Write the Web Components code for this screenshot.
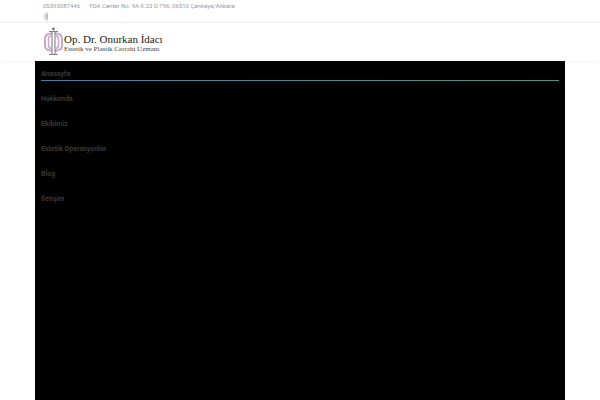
<!DOCTYPE html>
<html lang="tr">
<head>
<meta charset="UTF-8">
<meta name="viewport" content="width=device-width, initial-scale=1">
<title>Op. Dr. Onurkan İdacı</title>
<style>
    body {
        margin: 0;
        min-height: 100vh;
        display: flex;
        flex-direction: column;
        background: #fff;
        font-family: Roboto, "Liberation Sans", sans-serif;
        --page-width: 530px;
    }
</style>
</head>
<body>
<top-bar>
    <a href="tel:05393087446">05393087446</a>
    <span>YDA Center No: 9A K:23 D:796, 06510 Çankaya/Ankara</span>
</top-bar>
<site-header></site-header>
<site-menu>
    <menu-link href="#anasayfa" active>Anasayfa</menu-link>
    <menu-link href="#hakkimda">Hakkımda</menu-link>
    <menu-link href="#ekibimiz">Ekibimiz</menu-link>
    <menu-link href="#operasyonlar">Estetik Operasyonlar</menu-link>
    <menu-link href="#blog">Blog</menu-link>
    <menu-link href="#iletisim">İletişim</menu-link>
</site-menu>

<script>
class TopBar extends HTMLElement {
    connectedCallback() {
        this.attachShadow({ mode: 'open' });
        this.shadowRoot.innerHTML = `
            <style>
                :host {
                    display: block;
                    border-bottom: 1px solid #f5f5f5;
                    color: #999;
                    font-size: 6px;
                    font-weight: 400;
                    line-height: 12px;
                }

                .container {
                    box-sizing: border-box;
                    max-width: var(--page-width);
                    height: 22px;
                    margin: 0 auto;
                    padding: 0 8px;
                }

                .info {
                    display: flex;
                    gap: 9px;
                }

                ::slotted(*) {
                    color: inherit;
                    text-decoration: none;
                    white-space: nowrap;
                }

                .social {
                    display: block;
                    width: 5px;
                    height: 9px;
                }

                svg {
                    display: block;
                }
            </style>

            <div class="container">
                <div class="info"><slot></slot></div>
                <a class="social" href="#social" aria-label="Instagram">
                    <svg width="5" height="9" viewBox="0 0 5 9">
                        <path d="M5 0 A4.5 4.5 0 0 0 5 9Z" fill="#dedede"/>
                        <path d="M5 2 H4 Q3 2 3 3 V6 Q3 7 4 7 H5Z" fill="#bdbdbd"/>
                    </svg>
                </a>
            </div>
        `;
    }
}

class SiteHeader extends HTMLElement {
    connectedCallback() {
        this.attachShadow({ mode: 'open' });
        this.shadowRoot.innerHTML = `
            <style>
                :host {
                    display: block;
                    box-shadow: 0 0 3px rgba(0, 0, 0, 0.08);
                }

                .container {
                    box-sizing: border-box;
                    max-width: var(--page-width);
                    height: 38px;
                    margin: 0 auto;
                    padding: 0 8px;
                    display: flex;
                    align-items: center;
                }

                .logo {
                    display: flex;
                    align-items: center;
                    gap: 1px;
                    color: #222;
                    font-family: "Liberation Serif", serif;
                    text-decoration: none;
                    white-space: nowrap;
                }

                .text {
                    padding-top: 2px;
                }

                .name, .title {
                    display: block;
                }

                .name {
                    font-size: 11px;
                    line-height: 11px;
                }

                .title {
                    color: #444;
                    font-size: 7px;
                    line-height: 8px;
                }
            </style>

            <div class="container">
                <a class="logo" href="#anasayfa">
                    <svg width="20" height="30" viewBox="0 0 20 30" fill="none" aria-hidden="true">
                        <g stroke="#cba6c6">
                            <path d="M9 6.5 H8 C4 6.5 2 9 2 12 V18 C2 21 4 23.5 8 23.5 H9" stroke-width="2"/>
                            <path d="M12 6.5 H13 C17 6.5 19 9 19 12 V18 C19 21 17 23.5 13 23.5 H12" stroke-width="2"/>
                            <path d="M8 8.5 C6 9 5.5 10.5 5.5 12 V18 C5.5 19.5 6 21 8 21.5" stroke-width="1.5"/>
                            <path d="M13 8.5 C15 9 15.5 10.5 15.5 12 V18 C15.5 19.5 15 21 13 21.5" stroke-width="1.5"/>
                        </g>
                        <g stroke="#77727f">
                            <path d="M9 4 V27 M12 4 V27" stroke-width="1"/>
                            <path d="M6 4.5 H15 M6 27.5 H15" stroke-width="0.9"/>
                        </g>
                        <circle cx="10.5" cy="2" r="1.4" fill="#77727f"/>
                    </svg>
                    <span class="text">
                        <span class="name">Op. Dr. Onurkan İdacı</span>
                        <span class="title">Estetik ve Plastik Cerrahi Uzmanı</span>
                    </span>
                </a>
            </div>
        `;
    }
}

class SiteMenu extends HTMLElement {
    connectedCallback() {
        this.attachShadow({ mode: 'open' });
        this.shadowRoot.innerHTML = `
            <style>
                :host {
                    display: flex;
                    flex: 1;
                }

                nav {
                    box-sizing: border-box;
                    flex: 1;
                    max-width: var(--page-width);
                    margin: 0 auto;
                    padding: 1px 6px 0;
                    background: #000;
                    position: relative;
                }
            </style>

            <nav aria-label="Menü"><slot></slot></nav>
        `;
    }
}

class MenuLink extends HTMLElement {
    connectedCallback() {
        this.attachShadow({ mode: 'open' });
        this.shadowRoot.innerHTML = `
            <style>
                :host {
                    display: block;
                    height: 25px;
                }

                a {
                    display: block;
                    padding-top: 6px;
                    color: #383838;
                    font-size: 7px;
                    font-weight: 700;
                    line-height: 12px;
                    text-decoration: none;
                }

                :host([active]) a::after {
                    content: '';
                    display: block;
                    height: 1px;
                    background: linear-gradient(90deg, #4a7fa5, #4f9480);
                }
            </style>

            <a href="${this.getAttribute('href')}"><slot></slot></a>
        `;
    }
}

customElements.define('top-bar', TopBar);
customElements.define('site-header', SiteHeader);
customElements.define('site-menu', SiteMenu);
customElements.define('menu-link', MenuLink);
</script>
</body>
</html>
